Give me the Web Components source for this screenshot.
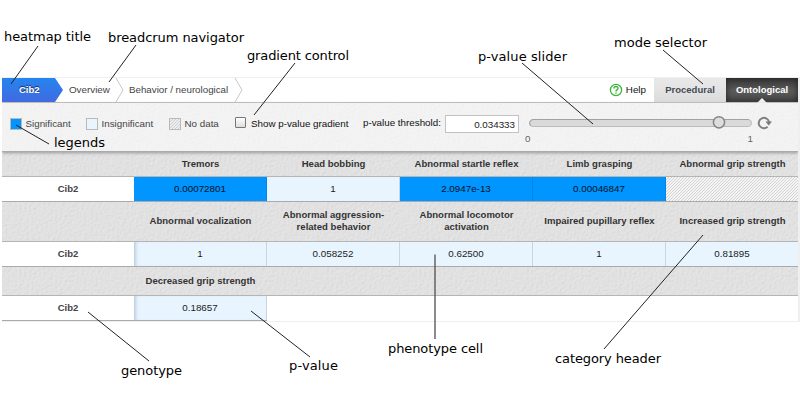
<!DOCTYPE html>
<html lang="en">
<head>
<meta charset="utf-8">
<title>Heatmap guide</title>
<style>
html,body{margin:0;background:#fff}
body{width:800px;height:400px;overflow:hidden;position:relative;font:9.8px/12px "Liberation Sans",Arial,sans-serif;color:#444;
--grain:url("data:image/svg+xml,%3Csvg xmlns='http://www.w3.org/2000/svg' width='200' height='100'%3E%3Cfilter id='g' x='0' y='0' width='100%25' height='100%25' color-interpolation-filters='sRGB'%3E%3CfeTurbulence type='fractalNoise' baseFrequency='.42' numOctaves='3' seed='4' stitchTiles='stitch'/%3E%3CfeDiffuseLighting surfaceScale='.9' diffuseConstant='.6' lighting-color='white'%3E%3CfeDistantLight azimuth='225' elevation='60'/%3E%3C/feDiffuseLighting%3E%3C/filter%3E%3Crect width='200' height='100' filter='url(%23g)'/%3E%3C/svg%3E");
--hatch:url("data:image/svg+xml,%3Csvg xmlns='http://www.w3.org/2000/svg' width='3' height='3'%3E%3Cpath d='M-1 1L1-1M-1 4L4-1M2 4L4 2' stroke='%23bbb' stroke-width='.6'/%3E%3C/svg%3E")}
</style>
</head>
<body>
<heat-map>
  <heat-nav slot="nav"></heat-nav>
  <heat-toolbar slot="toolbar"></heat-toolbar>
  <heat-row style="--head:24px" heads="Tremors|Head bobbing|Abnormal startle reflex|Limb grasping|Abnormal grip strength" values="0.00072801*|1|2.0947e-13*|0.00046847*|#"></heat-row>
  <heat-row style="--head:39px" heads="Abnormal vocalization|Abnormal aggression-related behavior|Abnormal locomotor activation|Impaired pupillary reflex|Increased grip strength" values="1|0.058252|0.62500|1|0.81895"></heat-row>
  <heat-row last style="--head:28px" heads="Decreased grip strength" values="0.18657"></heat-row>
</heat-map>
<guide-notes></guide-notes>
<script>
const define=(name,html,fill)=>customElements.define(name,class extends HTMLElement{
  connectedCallback(){
    if(this.shadowRoot)return;
    const t=document.createElement('template');t.innerHTML=html;
    this.attachShadow({mode:'open'}).append(t.content.cloneNode(true));
    if(fill)fill(this,this.shadowRoot);
  }
});

define('heat-map',`<style>
:host{display:block;box-sizing:border-box;width:798px;height:245px;margin:77px 0 0 2px;border:solid #efefef;border-width:1px 2px 1px 0;overflow:hidden}
</style><slot name="nav"></slot><slot name="toolbar"></slot><slot></slot>`);

define('heat-crumb',`<style>
:host{display:flex;align-items:center;height:24px;box-sizing:border-box}
svg{flex:none;width:9px;height:24px;margin-left:auto}
:host([active]){color:#fff;font-weight:bold;font-size:9.5px;text-shadow:0 -1px 1px #225;background:linear-gradient(#2585ef,#4169e1);clip-path:polygon(0 0,calc(100% - 8px) 0,100% 50%,calc(100% - 8px) 100%,0 100%)}
:host([active]) svg{display:none}
</style><slot></slot><svg viewBox="0 0 9 24" fill="none" stroke="#c6c6c6"><path d="M1 0L8 12L1 24"/></svg>`);

define('heat-nav',`<style>
:host{display:flex;height:24px;background:#fff;border-bottom:1px solid #c4c4c4}
heat-crumb:nth-of-type(1){width:61px;padding-left:17px}
heat-crumb:nth-of-type(2){width:61px;padding-left:6px}
heat-crumb:nth-of-type(3){width:119px;padding-left:5px;font-size:9.75px}
.help{margin-left:auto;display:flex;align-items:center;gap:3px;color:#111;padding-right:8px}
.help svg{width:14px;height:14px}
.tab{display:flex;align-items:center;justify-content:center;font-weight:bold;font-size:9.5px;height:24px;color:#444b55}
.p{width:72px;background:linear-gradient(#e9e9e9,#dcdcdc)}
.o{width:72px;color:#fff;background:linear-gradient(#393939,#5b5b5b 55%,#484848);box-shadow:inset 0 0 6px #222;position:relative}
.o::after{content:"";position:absolute;left:31px;bottom:-1px;border:5px solid transparent;border-top:0;border-bottom:5px solid #f4f4f4}
</style><heat-crumb active>Cib2</heat-crumb><heat-crumb>Overview</heat-crumb><heat-crumb>Behavior / neurological</heat-crumb>
<div class="help"><svg viewBox="0 0 14 14" fill="none" stroke="#3cb43c"><circle cx="7" cy="7" r="5.6" stroke-width="1.3"/><path d="M4.9 5.5C5 2.8 9.2 3 9 5.4C8.9 6.9 7 6.8 7 8.4M7 9.4V10.7" stroke-width="1.4"/></svg><span>Help</span></div>
<div class="tab p">Procedural</div><div class="tab o">Ontological</div>`);

define('legend-item',`<style>
:host{display:flex;align-items:center;gap:4px;height:12px}
i{box-sizing:border-box;width:11.5px;height:12px;border:1px solid #b9b9b9;background:#e8f5ff;flex:none}
:host([kind=sig]) i{background:#0095ff}
:host([kind=none]) i{background:var(--hatch) #eee}
</style><i></i><slot></slot>`);

define('p-slider',`<style>
:host{display:block;width:228px}
svg{display:block;width:228px;height:16px}
div{display:flex;justify-content:space-between;color:#666;height:12px;line-height:12px;margin:2px 2px 0 -2px}
</style><svg viewBox="0 0 228 16"><rect x="2.5" y="4.5" width="222" height="7" rx="3.5" fill="#dadada" stroke="#bdbdbd"/><path d="M3.5 11C2 8 3 5 6 4.5H222" fill="none" stroke="#999" stroke-width=".8"/><circle cx="192" cy="7.3" r="5.6" fill="#ddd" stroke="#858585" stroke-width="1.5"/></svg><div><span>0</span><span>1</span></div>`);

define('heat-toolbar',`<style>
:host{display:flex;box-sizing:border-box;height:49px;padding:15px 0 0 8px;background:var(--grain) #f2f2f2;background-blend-mode:overlay;border-bottom:1px solid #aaa;box-shadow:0 1px 3px #999;position:relative;white-space:nowrap}
legend-item{flex:none}
.check{display:flex;align-items:center;height:12px;gap:5px;flex:none;color:#111}
.check i{box-sizing:border-box;width:11px;height:11px;border:1px solid #777;border-radius:1px;background:linear-gradient(#fff,#ddd);margin-top:-4px}
.th{margin:-1px 0 0 14.500px;height:12px;color:#111;flex:none;width:79px}
.value{box-sizing:border-box;flex:none;width:74px;height:18px;border:1px solid #c2c2c2;background:#fff;color:#222;text-align:right;line-height:17px;padding-right:3px;margin:-3px 8px 0 3px}
p-slider{margin-top:-3px;flex:none}
.re{width:15px;height:15px;margin:-3px 0 0 2px;flex:none}
</style>
<legend-item kind="sig" style="width:76px">Significant</legend-item><legend-item style="width:83px">Insignificant</legend-item><legend-item kind="none" style="width:66px">No data</legend-item>
<div class="check"><i></i><span>Show p-value gradient</span></div><div class="th">p-value threshold:</div><div class="value">0.034333</div><p-slider></p-slider>
<svg class="re" viewBox="0 0 15 15"><path d="M10.6 11.8A5.2 5.2 0 1 1 12 6.8" fill="none" stroke="#808080" stroke-width="2"/><path d="M8.500 6.500H15L11.700 10.500Z" fill="#777"/></svg>`);

define('heat-row',`<style>
:host{display:block;color:#222}
.heads,.cells{display:grid;grid-template-columns:132px repeat(5,133px);width:797px}
.heads{height:var(--head);background:var(--grain) #e0e0e0;background-blend-mode:overlay;border-bottom:1px solid #b5b5b5;font-weight:bold;font-size:9.55px;color:#333;align-items:center;text-align:center}
.heads div{padding:0 10px;margin-top:-1px}
.cells{height:24px;background:#fff;border-bottom:1px solid #aaa}
:host([last]) .cells{background:linear-gradient(90deg,#aaa 265px,transparent 265px) 0 100%/100% 1px no-repeat #fff;border:0;height:25px}
.cells div{display:flex;align-items:center;justify-content:center;box-sizing:border-box;background:#e8f5ff;border-right:1px solid #c5d6e2}
.cells .gene{font-weight:bold;font-size:9.5px;background:#fff;color:#444;border:0}
.cells .gene+div{box-shadow:inset 4px 0 4px -3px #abc}
.cells .sig{background:#0095ff!important;color:#012;border-color:#0086e6;box-shadow:none!important}
.cells .none{background:var(--hatch) #f5f5f5}
:host([last]) .cells div{height:24px}
</style><div class="heads"></div><div class="cells"></div>`,(host,root)=>{
  const add=(box,text,cls)=>{const d=document.createElement('div');d.textContent=text;if(cls)d.className=cls;box.append(d)};
  const h=root.querySelector('.heads'),c=root.querySelector('.cells');
  add(h,'');add(c,'Cib2','gene');
  host.getAttribute('heads').split('|').forEach(t=>add(h,t));
  host.getAttribute('values').split('|').forEach(v=>add(c,v.replace(/[*#]/,''),v.endsWith('*')?'sig':v==='#'?'none':''));
});

define('guide-notes',`<style>
:host{position:absolute;inset:0;z-index:5;pointer-events:none}
svg{display:block;font:13px "DejaVu Sans",sans-serif}
</style><svg width="800" height="400" viewBox="0 0 800 400">
<g fill="none" stroke="#222" stroke-width="1"><path d="M38 46L11 84M136 45L109 82M295 63L254 115M522 63L593 124M663 50L703 84M16 125L49 144M88 312L149 361M251 311L310 357M703 235L604 349"/><path d="M435 254.500V339" stroke="#555" stroke-opacity=".8" stroke-width="1.7"/></g>
<g fill="#000"><text x="4" y="41" textLength="87">heatmap title</text><text x="108" y="42" textLength="136">breadcrum navigator</text><text x="247" y="60" textLength="102">gradient control</text><text x="478" y="61" textLength="89">p-value slider</text><text x="614" y="47" textLength="93">mode selector</text><text x="54" y="147" textLength="51">legends</text><text x="121" y="375" textLength="61">genotype</text><text x="289" y="370" textLength="49">p-value</text><text x="388" y="353" textLength="95">phenotype cell</text><text x="555" y="363" textLength="106">category header</text></g>
</svg>`);
</script>
</body>
</html>
